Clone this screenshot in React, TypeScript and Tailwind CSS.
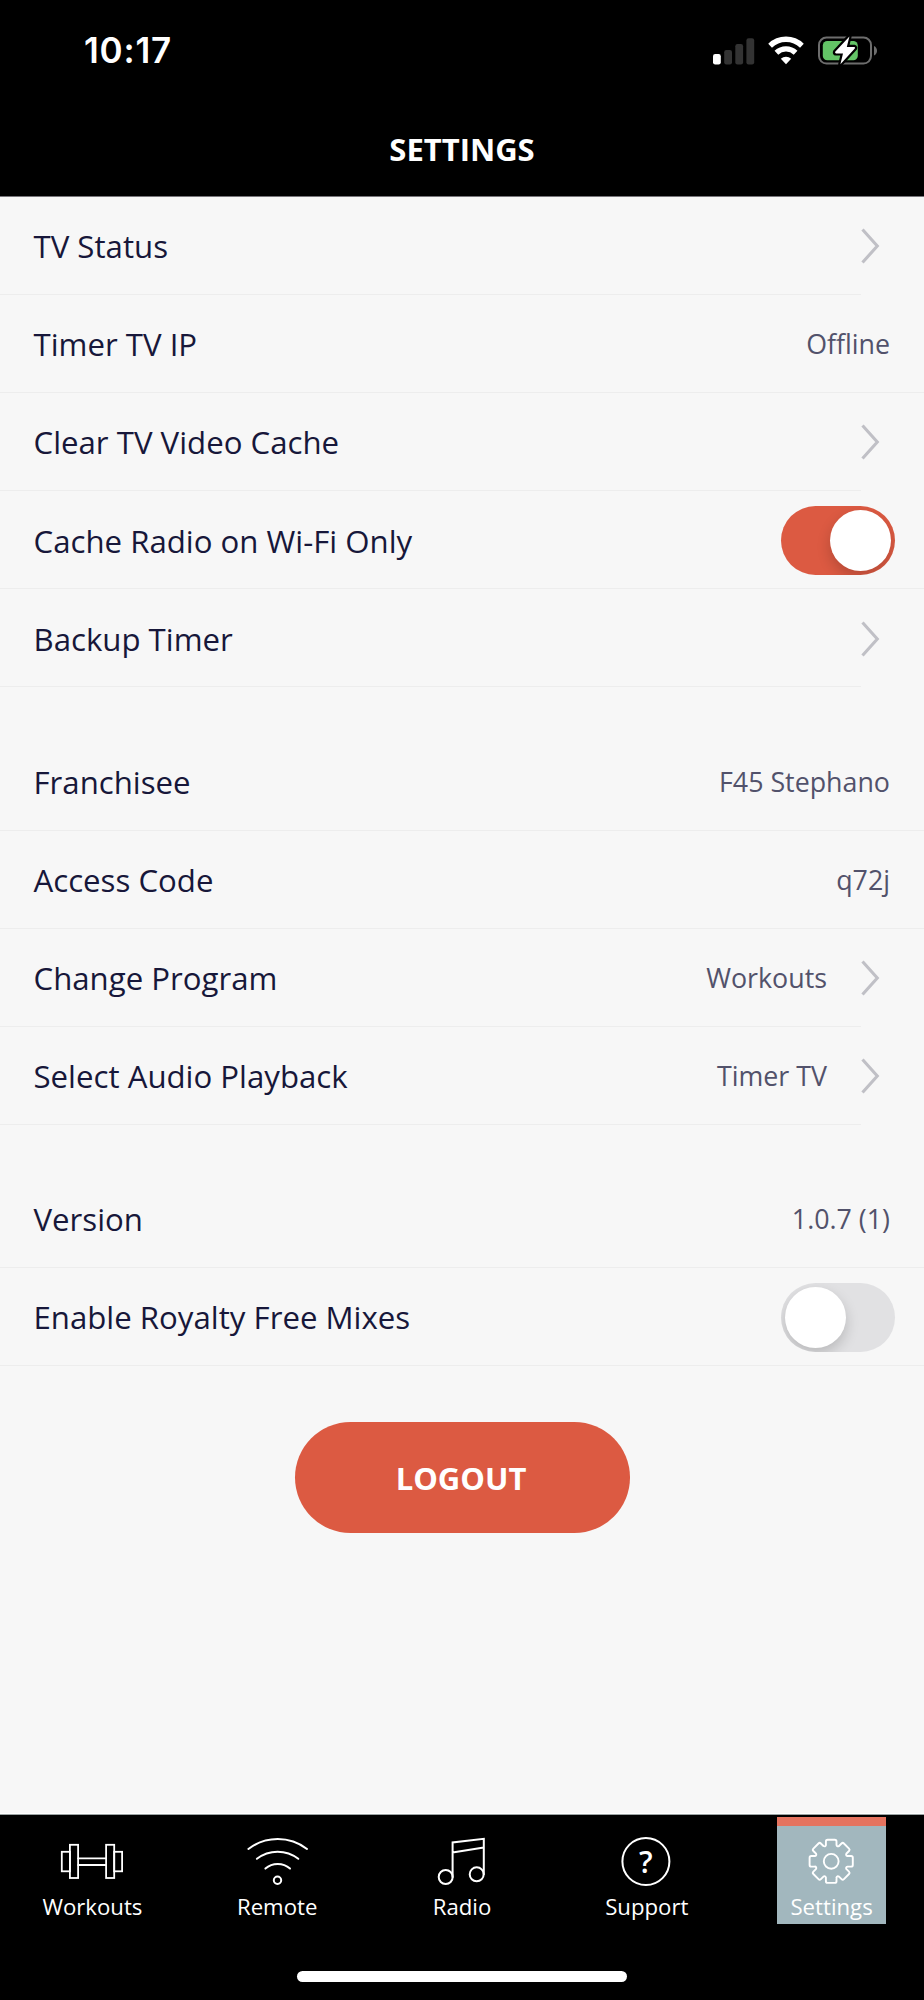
import type { ReactNode } from "react";

const ON_COLOR = "bg-[#dc5a42]";
const OFF_COLOR = "bg-[#e1e1e3]";

function SignalIcon() {
  return (
    <svg width="42" height="30" viewBox="0 0 42 30">
      <rect x="0" y="18" width="7.8" height="10.5" rx="2.2" fill="#fff" />
      <rect x="11.2" y="14" width="7.8" height="14.5" rx="2.2" fill="#333" />
      <rect x="22.3" y="8" width="7.8" height="20.5" rx="2.2" fill="#333" />
      <rect x="33.4" y="2.3" width="7.8" height="26.2" rx="2.2" fill="#333" />
    </svg>
  );
}

function WifiIcon() {
  return (
    <svg width="36" height="30" viewBox="0 0 36 30">
      <path d="M2.1 9.7A23 23 0 0 1 33.9 9.7" fill="none" stroke="#fff" strokeWidth="5.4" />
      <path d="M8.4 16.7A14 14 0 0 1 27.6 16.7" fill="none" stroke="#fff" strokeWidth="5.4" />
      <path d="M18 28.3L12.8 22.7A7.6 7.6 0 0 1 23.2 22.7Z" fill="#fff" />
    </svg>
  );
}

function BatteryIcon() {
  return (
    <svg width="60" height="32" viewBox="0 0 60 32">
      <rect x="1" y="2.6" width="52" height="26" rx="7.5" fill="none" stroke="#6d6d6d" strokeWidth="2" />
      <rect x="4.8" y="5.9" width="35" height="19.4" rx="4.5" fill="#63c466" />
      <path d="M56 11C60 12.5 60 19 56 20.5Z" fill="#6d6d6d" />
      <path
        d="M31.4 1.4L17.2 16.8Q16.6 18.2 18 18.4H25L22.4 29.2L36.8 13.6Q37.6 12.3 36.2 12H28.8Z"
        fill="#fff"
        stroke="#000"
        strokeWidth="4.4"
        strokeLinejoin="round"
        paintOrder="stroke"
      />
    </svg>
  );
}

function Chevron() {
  return (
    <svg width="19" height="36" viewBox="0 0 19 36" className="shrink-0">
      <path d="M1.5 1.5L16.3 18L1.5 34.5" fill="none" stroke="#c0c0c6" strokeWidth="3.1" />
    </svg>
  );
}

function Toggle({ on }: { on: boolean }) {
  return (
    <button
      role="switch"
      aria-checked={on}
      className={`flex h-[69px] w-[114px] shrink-0 items-center overflow-hidden rounded-full px-1 ${
        on ? `justify-end ${ON_COLOR}` : `justify-start ${OFF_COLOR}`
      }`}
    >
      <span className="size-[61px] rounded-full bg-white shadow-[0_6px_14px_rgba(0,0,0,0.18)]" />
    </button>
  );
}

type RowProps = { label: string; value?: string; link?: boolean; toggle?: boolean };

function Row({ label, value, link, toggle }: RowProps) {
  return (
    <div className="flex h-[98.1px] flex-col">
      <div
        className={`flex min-h-0 flex-1 items-center justify-between pt-[1.4px] pl-[33.5px] ${
          toggle !== undefined ? "pr-[29px]" : link ? "pr-[44px]" : "pr-[34px]"
        }`}
      >
        <span className="text-[31.2px] leading-[32px] whitespace-nowrap text-[#17173a]">{label}</span>
        <div className="flex items-center gap-[34px]">
          {value && <span className="text-[26.8px] leading-[28px] whitespace-nowrap text-[#52526b]">{value}</span>}
          {link && <Chevron />}
          {toggle !== undefined && <Toggle on={toggle} />}
        </div>
      </div>
      <div className={`h-px shrink-0 bg-[#ededed] ${link ? "mr-[63px]" : ""}`} />
    </div>
  );
}

function TabIcon({ children }: { children: ReactNode }) {
  return (
    <svg
      width="80"
      height="56"
      viewBox="0 0 80 56"
      fill="none"
      stroke="#fff"
      strokeWidth="2"
      strokeLinecap="round"
      className="shrink-0"
    >
      {children}
    </svg>
  );
}

function gearPath(cx: number, cy: number) {
  let d = "";
  for (let i = 0; i < 8; i++) {
    const a = (i * Math.PI) / 4;
    const p = (x: number, y: number) =>
      `${(cx + x * Math.cos(a) - y * Math.sin(a)).toFixed(2)} ${(cy + x * Math.sin(a) + y * Math.cos(a)).toFixed(2)}`;
    d += `${i ? "L" : "M"}${p(-5.3, -16.3)}L${p(-5.3, -19.9)}Q${p(-5.3, -21.6)} ${p(-3.6, -21.6)}L${p(3.6, -21.6)}Q${p(5.3, -21.6)} ${p(5.3, -19.9)}L${p(5.3, -16.3)}Q${p(5.9, -14.2)} ${p(7.8, -15.2)}`;
  }
  return d + "Z";
}

const tabs: { label: string; icon: ReactNode; active?: boolean }[] = [
  {
    label: "Workouts",
    icon: (
      <g strokeWidth="1.8">
        <rect x="9.8" y="19.8" width="8.1" height="19.5" />
        <rect x="17.9" y="12.8" width="8.2" height="33.2" />
        <path d="M26.1 26.3H54.1M26.1 33H54.1" />
        <rect x="54.1" y="12.8" width="8.1" height="33.2" />
        <rect x="62.2" y="19.8" width="7.9" height="19.5" />
      </g>
    ),
  },
  {
    label: "Remote",
    icon: (
      <>
        <path d="M11.4 17A48 48 0 0 1 70 17" />
        <path d="M19.9 26.8A33.7 33.7 0 0 1 61.3 26.8" />
        <path d="M28.4 36.6A18.4 18.4 0 0 1 53 36.6" />
        <circle cx="40.5" cy="48.3" r="3.7" />
      </>
    ),
  },
  {
    label: "Radio",
    icon: (
      <>
        <circle cx="23.7" cy="45" r="7" />
        <circle cx="54.7" cy="42.3" r="7" />
        <path d="M30.6 45V10.4L61.8 6.8V42.3M30.6 20.4L61.8 15.6" />
      </>
    ),
  },
  {
    label: "Support",
    icon: (
      <>
        <circle cx="38.9" cy="29.5" r="23.5" />
        <text
          x="38.7"
          y="40.6"
          textAnchor="middle"
          fill="#fff"
          stroke="none"
          className="font-['Open_Sans',sans-serif] text-[30px] font-semibold"
        >
          ?
        </text>
      </>
    ),
  },
  {
    label: "Settings",
    active: true,
    icon: (
      <g strokeWidth="1.9">
        <path d={gearPath(39.2, 29.3)} strokeLinejoin="round" />
        <circle cx="39.2" cy="29.3" r="7.4" />
      </g>
    ),
  },
];

export default function App() {
  return (
    <div className="flex h-[2000px] w-[924px] flex-col bg-[#f7f7f7] font-['Open_Sans',sans-serif]">
      <header className="flex h-[197px] shrink-0 flex-col border-b border-[#77757a] bg-black text-white">
        <div className="flex h-[102px] items-center justify-between pr-[46.5px] pl-[84px]">
          <span className="pb-px font-['Inter',sans-serif] text-[35px] leading-none font-semibold tracking-[0.8px]">
            10:17
          </span>
          <div className="flex items-center gap-[13.5px]">
            <SignalIcon />
            <WifiIcon />
            <BatteryIcon />
          </div>
        </div>
        <h1 className="flex h-[94px] items-center justify-center text-[31px] leading-[32px] font-bold">SETTINGS</h1>
      </header>

      <main className="flex min-h-0 flex-1 flex-col">
        <section>
          <Row label="TV Status" link />
          <Row label="Timer TV IP" value="Offline" />
          <Row label="Clear TV Video Cache" link />
          <Row label="Cache Radio on Wi-Fi Only" toggle={true} />
          <Row label="Backup Timer" link />
        </section>
        <section className="mt-[45px]">
          <Row label="Franchisee" value="F45 Stephano" />
          <Row label="Access Code" value="q72j" />
          <Row label="Change Program" value="Workouts" link />
          <Row label="Select Audio Playback" value="Timer TV" link />
        </section>
        <section className="mt-[45px]">
          <Row label="Version" value="1.0.7 (1)" />
          <Row label="Enable Royalty Free Mixes" toggle={false} />
        </section>
        <button className="mt-[56px] h-[111px] w-[335px] shrink-0 self-center rounded-full bg-[#dc5a42] pr-0.5 text-[31px] leading-[32px] font-bold text-white">
          LOGOUT
        </button>
      </main>

      <footer className="flex h-[187px] shrink-0 flex-col border-t border-white bg-black">
        <nav className="flex h-[111px] shrink-0 border-t border-[#9ba3a3] text-white">
          {tabs.map((tab) => (
            <a key={tab.label} className="flex flex-1 justify-center pt-0.5">
              <div
                className={`flex h-[107px] w-[109px] flex-col items-center ${
                  tab.active ? "border-t-[9px] border-[#e5735f] bg-[#a2b7be] pt-[6px]" : "pt-[15px]"
                }`}
              >
                <TabIcon>{tab.icon}</TabIcon>
                <span className="mt-[7px] text-[22.2px] leading-[24px] whitespace-nowrap">{tab.label}</span>
              </div>
            </a>
          ))}
        </nav>
        <div className="mt-[46px] h-[11px] w-[330px] self-center rounded-full bg-white" />
      </footer>
    </div>
  );
}
